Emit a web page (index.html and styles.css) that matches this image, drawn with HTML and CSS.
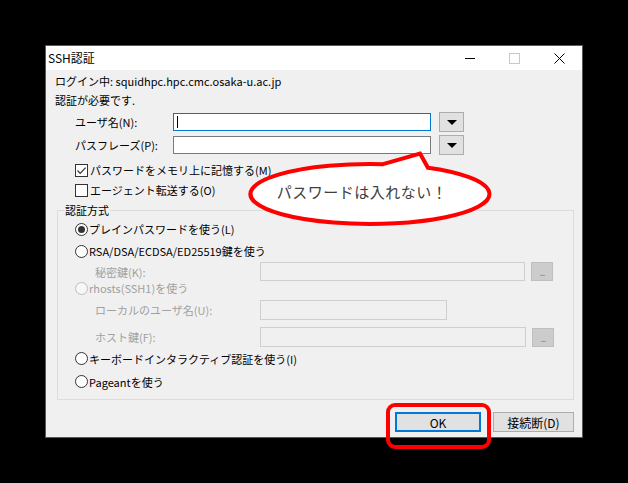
FILE: index.html
```html
<!DOCTYPE html>
<html lang="ja">
<head>
<meta charset="utf-8">
<title>SSH認証</title>
<link rel="stylesheet" href="styles.css">
</head>
<body>
<div class="desk">
  <div class="dialog">
    <div class="titlebar">
      <span class="title">SSH認証</span>
      <div class="tbtns">
        <span class="tb"><span class="min-line"></span></span>
        <span class="tb"><span class="max-box"></span></span>
        <span class="tb"><svg class="close-x" width="11" height="11" viewBox="0 0 11 11"><path d="M0.5 0.5 L10.5 10.5 M10.5 0.5 L0.5 10.5" stroke="#000" stroke-width="1" fill="none"/></svg></span>
      </div>
    </div>
    <div class="content">
      <div class="info">ログイン中: squidhpc.hpc.cmc.osaka-u.ac.jp</div>
      <div class="info">認証が必要です.</div>
      <div class="field-row row-user">
        <span class="flabel">ユーザ名(N):</span>
        <div class="textbox focused"><span class="caret"></span></div>
        <div class="dd"><span class="tri"></span></div>
      </div>
      <div class="field-row row-pass">
        <span class="flabel">パスフレーズ(P):</span>
        <div class="textbox"></div>
        <div class="dd"><span class="tri"></span></div>
      </div>
      <div class="check-row row-c1">
        <span class="checkbox"><svg width="11" height="11" viewBox="0 0 11 11"><path d="M1.5 5.5 L4.2 8.3 L9.6 2.6" stroke="#333" stroke-width="1.2" fill="none"/></svg></span>
        <span>パスワードをメモリ上に記憶する(M)</span>
      </div>
      <div class="check-row">
        <span class="checkbox"></span>
        <span>エージェント転送する(O)</span>
      </div>
      <fieldset class="group">
        <legend>認証方式</legend>
        <div class="radio-row r1"><span class="radio on"></span><span>プレインパスワードを使う(L)</span></div>
        <div class="radio-row r2"><span class="radio"></span><span>RSA/DSA/ECDSA/ED25519鍵を使う</span></div>
        <div class="sub-row r3"><span class="sublabel">秘密鍵(K):</span><div class="textbox dis long"></div><div class="browse">...</div></div>
        <div class="radio-row r4 disabled"><span class="radio dis"></span><span>rhosts(SSH1)を使う</span></div>
        <div class="sub-row r5"><span class="sublabel">ローカルのユーザ名(U):</span><div class="textbox dis short"></div></div>
        <div class="sub-row r6"><span class="sublabel">ホスト鍵(F):</span><div class="textbox dis long2"></div><div class="browse">...</div></div>
        <div class="radio-row r7"><span class="radio"></span><span>キーボードインタラクティブ認証を使う(I)</span></div>
        <div class="radio-row r8"><span class="radio"></span><span>Pageantを使う</span></div>
      </fieldset>
      <div class="buttons">
        <div class="btn default">OK</div>
        <div class="btn disc">接続断(D)</div>
      </div>
    </div>
  </div>
  <svg class="balloon" width="628" height="483" viewBox="0 0 628 483">
    <path d="M383 164.2 L420 153.5 L428 167.8 A119.5 30 0 1 1 383 164.2 Z" fill="#fff" stroke="#ff0000" stroke-width="4" stroke-linejoin="miter"/>
    <text x="362" y="198" text-anchor="middle" class="balloon-text">パスワードは入れない！</text>
  </svg>
  <div class="highlight"></div>
</div>
</body>
</html>
```
FILE: styles.css
```css
html, body {
  margin: 0;
  padding: 0;
}
body {
  background: #000;
  width: 628px;
  height: 483px;
  overflow: hidden;
  font-family: "Noto Sans CJK JP", "Noto Sans", sans-serif;
  font-size: 11px;
  color: #000;
}
.desk {
  position: relative;
  width: 628px;
  height: 483px;
  padding: 45px 0 0 45px;
  box-sizing: border-box;
}
.dialog {
  width: 538px;
  height: 393px;
  box-sizing: border-box;
  border: 1px solid #595959;
  background: #f0f0f0;
  display: flex;
  flex-direction: column;
}
.titlebar {
  height: 24px;
  background: #fff;
  display: flex;
  align-items: center;
  justify-content: space-between;
  padding-left: 2px;
}
.title {
  font-size: 12px;
  line-height: 16px;
}
.tbtns {
  display: flex;
  height: 24px;
}
.tb {
  width: 45px;
  height: 24px;
  display: flex;
  align-items: center;
  justify-content: center;
}
.min-line {
  width: 10px;
  height: 1px;
  background: #000;
}
.max-box {
  width: 9px;
  height: 9px;
  border: 1px solid #c8c8c8;
}
.content {
  flex: 1;
  padding: 2px 8px 0 9px;
  display: flex;
  flex-direction: column;
}
.info {
  height: 19px;
  line-height: 19px;
  white-space: nowrap;
}
.field-row {
  display: flex;
  align-items: center;
  height: 20px;
  padding-left: 20px;
}
.row-user { margin-top: 2px; }
.row-pass { margin-top: 3px; }
.flabel {
  width: 98px;
  white-space: nowrap;
}
.textbox {
  box-sizing: border-box;
  height: 18px;
  width: 258px;
  background: #fff;
  border: 1px solid #7a7a7a;
  display: flex;
  align-items: center;
  padding-left: 3px;
}
.textbox.focused {
  border-color: #0078d7;
}
.caret {
  width: 1px;
  height: 12px;
  background: #000;
}
.dd {
  box-sizing: border-box;
  width: 25px;
  height: 20px;
  margin-left: 8px;
  background: #e1e1e1;
  border: 1px solid #adadad;
  display: flex;
  align-items: center;
  justify-content: center;
}
.tri {
  width: 0;
  height: 0;
  border-left: 5px solid transparent;
  border-right: 5px solid transparent;
  border-top: 5px solid #000;
}
.check-row {
  display: flex;
  align-items: center;
  height: 20px;
  padding-left: 20px;
  white-space: nowrap;
}
.row-c1 { margin-top: 5px; }
.checkbox {
  box-sizing: border-box;
  width: 13px;
  height: 13px;
  border: 1px solid #333;
  background: #fff;
  margin-right: 2px;
  display: flex;
  align-items: center;
  justify-content: center;
}
.checkbox svg { display: block; }
.group {
  margin: 2px 0 0 2px;
  padding: 0 0 8px 0;
  border: 1px solid #dcdcdc;
  min-width: 0;
}
.group legend {
  margin-left: 6px;
  padding: 0 1px;
  line-height: 16px;
  font-size: 11px;
}
.radio-row {
  display: flex;
  align-items: center;
  padding-left: 17px;
  white-space: nowrap;
  height: 20px;
}
.radio {
  box-sizing: border-box;
  width: 13px;
  height: 13px;
  border-radius: 50%;
  border: 1px solid #333;
  background: #fff;
  margin-right: 1px;
  display: flex;
  align-items: center;
  justify-content: center;
}
.radio.on::after {
  content: "";
  width: 7px;
  height: 7px;
  border-radius: 50%;
  background: #333;
}
.radio.dis {
  border-color: #bcbcbc;
  background: #f7f7f7;
}
.disabled { color: #a0a0a0; }
.r1 { margin-top: 1px; height: 20px; }
.r2 { margin-top: 2px; height: 20px; }
.r4 { height: 14px; }
.r7 { margin-top: 2px; height: 19px; }
.r8 { margin-top: 4px; height: 19px; }
.sub-row {
  display: flex;
  align-items: center;
  padding-left: 37px;
  color: #a0a0a0;
  white-space: nowrap;
}
.r3 { margin-top: 1px; height: 19px; }
.r5 { margin-top: 5px; height: 20px; }
.r6 { margin-top: 7px; height: 20px; }
.sublabel {
  width: 165px;
}
.textbox.dis {
  background: #f0f0f0;
  border-color: #cfcfcf;
  height: 100%;
}
.textbox.long { width: 265px; }
.textbox.long2 { width: 266px; }
.textbox.short { width: 187px; }
.browse {
  box-sizing: border-box;
  width: 22px;
  height: 19px;
  margin-left: 6px;
  background: #cccccc;
  border: 1px solid #bfbfbf;
  color: #8a8a8a;
  font-size: 9px;
  line-height: 19px;
  text-align: center;
  letter-spacing: -1px;
}
.buttons {
  display: flex;
  justify-content: flex-end;
  gap: 12px;
  margin-top: 12px;
}
.btn {
  box-sizing: border-box;
  height: 20px;
  background: #e1e1e1;
  border: 1px solid #adadad;
  display: flex;
  align-items: center;
  justify-content: center;
  font-size: 12px;
}
.btn.default {
  width: 86px;
  border: 2px solid #0078d7;
}
.btn.disc {
  width: 81px;
}
.balloon {
  position: absolute;
  left: 0;
  top: 0;
  pointer-events: none;
}
.balloon-text {
  font-family: "Noto Sans CJK JP", sans-serif;
  font-size: 15px;
  letter-spacing: 0.5px;
  fill: #404040;
}
.highlight {
  position: absolute;
  left: 386px;
  top: 403px;
  width: 105px;
  height: 46px;
  box-sizing: border-box;
  border: 4px solid #ff0000;
  border-radius: 9px;
}
```
